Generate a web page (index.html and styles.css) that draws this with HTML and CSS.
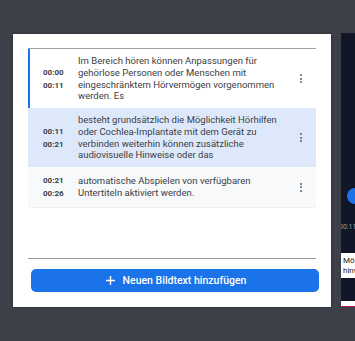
FILE: index.html
```html
<!DOCTYPE html>
<html lang="de">
<head>
    <meta charset="UTF-8">
    <meta name="viewport" content="width=device-width, initial-scale=1.0">
    <title>Bildtexte</title>
    <link rel="stylesheet" href="styles.css">
</head>
<body>
    <div class="page">
        <div class="dialog">
            <div class="cue-list">
                <div class="cue cue-active">
                    <div class="cue-time">
                        <span>00:00</span>
                        <span>00:11</span>
                    </div>
                    <div class="cue-text">Im Bereich hören können Anpassungen für gehörlose Personen oder Menschen mit eingeschränktem Hörvermögen vorgenommen werden. Es</div>
                    <button class="cue-menu" aria-label="Mehr"><i></i><i></i><i></i></button>
                </div>
                <div class="cue cue-selected">
                    <div class="cue-time">
                        <span>00:11</span>
                        <span>00:21</span>
                    </div>
                    <div class="cue-text">besteht grundsätzlich die Möglichkeit Hörhilfen oder Cochlea-Implantate mit dem Gerät zu verbinden weiterhin können zusätzliche audiovisuelle Hinweise oder das</div>
                    <button class="cue-menu" aria-label="Mehr"><i></i><i></i><i></i></button>
                </div>
                <div class="cue cue-plain">
                    <div class="cue-time">
                        <span>00:21</span>
                        <span>00:26</span>
                    </div>
                    <div class="cue-text">automatische Abspielen von verfügbaren Untertiteln aktiviert werden.</div>
                    <button class="cue-menu" aria-label="Mehr"><i></i><i></i><i></i></button>
                </div>
            </div>
            <div class="dialog-footer">
                <button class="add-button">
                    <svg width="9" height="9" viewBox="0 0 9 9"><path d="M4.5 0v9M0 4.5h9" stroke="#fff" stroke-width="1.4"/></svg>
                    Neuen Bildtext hinzufügen
                </button>
            </div>
        </div>

        <div class="player">
            <div class="player-knob"></div>
            <div class="player-time">00:11</div>
            <div class="player-caption">Mö<br>hinw</div>
            <div class="player-bar"></div>
        </div>
    </div>
</body>
</html>
```

FILE: styles.css
```css
body {
    font-family: Roboto, "Liberation Sans", sans-serif;
    background-color: #3e4049;
    margin: 0;
    padding: 0;
    overflow: hidden;
}

.page {
    display: flex;
    align-items: flex-start;
    padding-top: 34px;
    padding-left: 13px;
    width: 342px;
    height: 307px;
}

.dialog {
    width: 318px;
    height: 273px;
    flex-shrink: 0;
    background-color: #fff;
    box-shadow: 0 0 3px rgba(0, 0, 0, 0.35);
    display: flex;
    flex-direction: column;
    box-sizing: border-box;
    padding: 14px 15px 15px 15px;
}

.cue-list {
    flex: 1;
    border-top: 1px solid #9ea2a8;
    border-bottom: 1px solid #a59c97;
}

.cue {
    display: flex;
    align-items: center;
    min-height: 28px;
    padding: 6px 0 6px 13px;
    border-left: 2px solid transparent;
    color: #3c4043;
}

.cue-active {
    border-left-color: #1a73e8;
    background-color: #fff;
}

.cue-selected {
    background-color: #dde9fb;
}

.cue-plain {
    background-color: #f8f9fa;
    border-bottom: 1px solid #eef0f2;
}

.cue-time {
    width: 35px;
    flex-shrink: 0;
    display: flex;
    flex-direction: column;
    font-size: 8px;
    font-weight: 700;
    line-height: 13px;
}

.cue-text {
    width: 208px;
    font-size: 9.5px;
    line-height: 11.75px;
}

.cue-menu {
    width: 30px;
    height: 20px;
    padding: 0;
    border: none;
    background: none;
    display: flex;
    flex-direction: column;
    align-items: center;
    justify-content: center;
    gap: 1.5px;
    cursor: pointer;
}

.cue-menu i {
    width: 2px;
    height: 2px;
    border-radius: 50%;
    background-color: #5f6368;
}

.dialog-footer {
    padding: 10px 0 0 3px;
}

.add-button {
    width: 288px;
    height: 23px;
    border: none;
    border-radius: 5px;
    background-color: #1a73e8;
    color: #fff;
    font-family: Roboto, "Liberation Sans", sans-serif;
    font-size: 10.5px;
    font-weight: 500;
    display: flex;
    align-items: center;
    justify-content: center;
    gap: 8px;
    padding: 0 0 0 2px;
    cursor: pointer;
}

.player {
    margin-left: 10px;
    margin-top: -1px;
    width: 40px;
    height: 274px;
    flex-shrink: 0;
    background-color: #111726;
    position: relative;
    overflow: hidden;
}

.player-knob {
    position: absolute;
    left: 6px;
    top: 155px;
    width: 16px;
    height: 16px;
    border-radius: 50%;
    background-color: #1a73e8;
}

.player-time {
    position: absolute;
    left: -2px;
    top: 190px;
    font-size: 7px;
    color: #9aa0a6;
}

.player-caption {
    position: absolute;
    left: 0;
    top: 220px;
    width: 40px;
    height: 25px;
    box-sizing: border-box;
    padding: 3px 0 0 2px;
    background-color: #fff;
    color: #202124;
    font-size: 8px;
    line-height: 10px;
    white-space: nowrap;
}

.player-bar {
    position: absolute;
    left: 0;
    bottom: 0;
    width: 40px;
    height: 5px;
    background-color: #fff;
    border-bottom: 1px solid #c2185b;
}
```
